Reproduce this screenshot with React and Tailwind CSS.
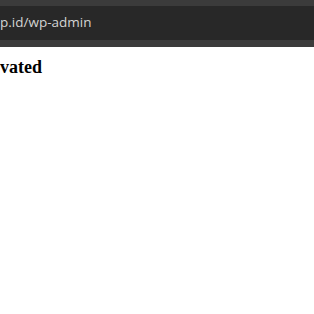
export default function App() {
  return (
    <div className="w-[314px] h-[314px] bg-white overflow-hidden">
      <div className="h-[47px] bg-[#3b3b3b] pt-[6px]">
        <div className="h-[34px] bg-[#282828] flex items-center">
          <span className="text-[13.5px] text-[#d4d4d4] whitespace-nowrap leading-none" style={{ fontFamily: '"Open Sans", "Liberation Sans", sans-serif' }}>
            p.id/wp-admin
          </span>
        </div>
      </div>
      <div className="pt-[11px]">
        <h3 className="text-[18px] font-bold text-black leading-none" style={{ fontFamily: '"Liberation Serif", serif' }}>
          vated
        </h3>
      </div>
    </div>
  );
}
